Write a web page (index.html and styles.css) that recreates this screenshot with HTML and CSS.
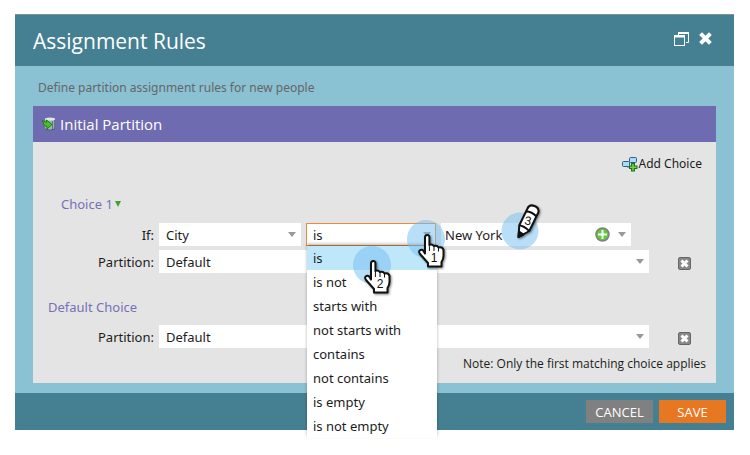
FILE: index.html
```
<!DOCTYPE html>
<html lang="en">
<head>
    <meta charset="utf-8">
    <title>Assignment Rules</title>
    <link rel="stylesheet" href="styles.css">
</head>

<body>
    <form class="dialog">
        <header class="dialog-header">
            <h1>Assignment Rules</h1>
            <div class="window-tools">
                <button type="button" class="icon-button" aria-label="Restore window">
                    <svg width="16" height="16" viewBox="0 0 16 16" fill="none" stroke="#fff">
                        <path d="M4.5 5V1.5H14.500V11.500H12"/>
                        <path d="M4 2H15" stroke-width="2"/>
                        <rect x=".5" y="4.500" width="10" height="10"/>
                        <path d="M0 5.500H11" stroke-width="2"/>
                    </svg>
                </button>
                <button type="button" class="icon-button" aria-label="Close">
                    <svg width="13" height="13" viewBox="0 0 13 13" stroke="#fff" stroke-width="4">
                        <path d="M1.600 1.600L11.400 11.400M11.400 1.600L1.600 11.400"/>
                    </svg>
                </button>
            </div>
        </header>

        <main class="dialog-body">
            <p class="description">Define partition assignment rules for new people</p>

            <section class="panel">
                <h2 class="panel-title">
                    <svg width="14" height="14" viewBox="0 0 14 14">
                        <path d="M3 2V12Q8 14.500 13 12V2Z" fill="#9fb3b5"/>
                        <ellipse cx="8" cy="2" rx="5" ry="1.500" fill="#dfe9ea"/>
                        <path d="M10.500 4V12.500M12.500 3V12" stroke="#5f7577"/>
                        <path d="M3 12Q8 14.500 13 12" fill="none" stroke="#485b5d"/>
                        <path d="M.5 3.500L4.500 5.500V3L10 7.500L5 12V9.500Q1.500 9 .5 3.500Z" fill="#45c422" stroke="#1d7a12"/>
                    </svg>
                    Initial Partition
                </h2>

                <div class="panel-body">
                    <div class="toolbar">
                        <button type="button" class="add-choice">
                            <svg width="16" height="16" viewBox="0 0 16 16">
                                <path d="M5 8V11H9" fill="none" stroke="#666"/>
                                <rect x="7.500" y="1.500" width="7" height="5" rx="1" fill="#a9dcf8" stroke="#2b5f87"/>
                                <rect x=".5" y="5.500" width="7" height="5" rx="1" fill="#a9dcf8" stroke="#2b5f87"/>
                                <path d="M9 7H13V9.500H15.500V13H13V15.500H9V13H7V9.500H9Z" fill="#237318"/>
                                <path d="M11 8V14.500M8 11.300H14.500" stroke="#68d83e" stroke-width="1.600"/>
                            </svg>
                            Add Choice
                        </button>
                    </div>

                    <h3 class="choice-title">Choice 1 <span class="green-arrow"></span></h3>

                    <div class="row">
                        <label for="attribute">If:</label>
                        <div class="condition">
                            <div class="field">
                                <select id="attribute"><option>City</option></select>
                            </div>
                            <div class="field operator">
                                <select aria-label="Operator"><option>is</option></select>
                                <ul class="menu" role="listbox" aria-label="Operator">
                                    <li role="option" class="selected" aria-selected="true">is</li>
                                    <li role="option">is not</li>
                                    <li role="option">starts with</li>
                                    <li role="option">not starts with</li>
                                    <li role="option">contains</li>
                                    <li role="option">not contains</li>
                                    <li role="option">is empty</li>
                                    <li role="option">is not empty</li>
                                </ul>
                                <svg class="step step-one" width="48" height="54" viewBox="0 0 48 54">
                                    <circle cx="20" cy="20" r="19" class="spot"/>
                                    <g class="hand">
                                        <path d="M19 18.500Q19 16 21.200 16T23.400 18.500V26Q25.500 24.500 28 27Q31 26 32.500 28.500Q36.500 27.500 37.500 31V37Q37.500 40 35.500 43V47.500H22V44L14 35Q12 32 14.500 31T19 34.500Z"/>
                                        <path class="knuckles" d="M23.400 26V32M28 27V32M32.500 28.500V32.500"/>
                                    </g>
                                    <text x="28" y="43" class="step-number">1</text>
                                </svg>
                                <svg class="step step-two" width="48" height="54" viewBox="0 0 48 54">
                                    <circle cx="20" cy="20" r="19" class="spot"/>
                                    <g class="hand">
                                        <path d="M19 18.500Q19 16 21.200 16T23.400 18.500V26Q25.500 24.500 28 27Q31 26 32.500 28.500Q36.500 27.500 37.500 31V37Q37.500 40 35.500 43V47.500H22V44L14 35Q12 32 14.500 31T19 34.500Z"/>
                                        <path class="knuckles" d="M23.400 26V32M28 27V32M32.500 28.500V32.500"/>
                                    </g>
                                    <text x="28" y="43" class="step-number">2</text>
                                </svg>
                            </div>
                            <div class="field value">
                                <input type="text" aria-label="Value" value="New York">
                                <button type="button" class="icon-button" aria-label="Add value">
                                    <svg width="15" height="15" viewBox="0 0 15 15">
                                        <circle cx="7.500" cy="7.500" r="6.500" fill="#5cc83b" stroke="#808080" stroke-width="1.500"/>
                                        <path d="M7.500 3V12M3 7.500H12" stroke="#fff" stroke-width="2"/>
                                    </svg>
                                </button>
                                <svg class="step step-three" width="48" height="50" viewBox="0 0 48 50">
                                    <circle cx="20" cy="30" r="18.500" class="spot"/>
                                    <g class="pencil">
                                        <path d="M18.500 36L19.300 24.300L27.500 7.500Q29.500 3 34.500 5T38.300 11.500L29.300 30Z"/>
                                        <path d="M19.300 24.300Q24 25 29.300 30M26 10.500Q32 10.500 36.500 15.500" fill="none"/>
                                        <path d="M19 30.500L18.500 36L23.500 33.500Z" fill="#111"/>
                                    </g>
                                    <text x="28" y="24" class="step-number" transform="rotate(10 28 20)">3</text>
                                </svg>
                            </div>
                        </div>
                    </div>

                    <div class="row">
                        <label for="partition">Partition:</label>
                        <div class="field">
                            <select id="partition"><option>Default</option></select>
                        </div>
                        <button type="button" class="icon-button" aria-label="Remove choice">
                            <svg width="13" height="13" viewBox="0 0 13 13">
                                <rect x=".5" y=".5" width="12" height="12" rx="1.500" fill="#888" stroke="#666"/>
                                <path d="M3.500 3.500L9.500 9.500M9.500 3.500L3.500 9.500" stroke="#fff" stroke-width="3"/>
                            </svg>
                        </button>
                    </div>

                    <h3 class="default-title">Default Choice</h3>

                    <div class="row">
                        <label for="default-partition">Partition:</label>
                        <div class="field">
                            <select id="default-partition"><option>Default</option></select>
                        </div>
                        <button type="button" class="icon-button" aria-label="Remove default choice">
                            <svg width="13" height="13" viewBox="0 0 13 13">
                                <rect x=".5" y=".5" width="12" height="12" rx="1.500" fill="#888" stroke="#666"/>
                                <path d="M3.500 3.500L9.500 9.500M9.500 3.500L3.500 9.500" stroke="#fff" stroke-width="3"/>
                            </svg>
                        </button>
                    </div>

                    <p class="note">Note: Only the first matching choice applies</p>
                </div>
            </section>
        </main>

        <footer class="dialog-footer">
            <button type="button" class="cancel">CANCEL</button>
            <button type="submit" class="save">SAVE</button>
        </footer>
    </form>
</body>
</html>
```
FILE: styles.css
```
* {
    box-sizing: border-box;
}

body {
    min-height: 100vh;
    margin: 0;
    padding: 14px 16px 14px 15px;
    background: #fff;
    font: 13px/18px "Noto Sans", sans-serif;
    color: #1c1c1c;
}

h1, h2, h3, p, ul {
    margin: 0;
    padding: 0;
    font-weight: normal;
}

button, input, select {
    margin: 0;
    padding: 0;
    border: 0;
    background: none;
    color: inherit;
    font: inherit;
}

.dialog {
    background: #8ac1d3;
}

.dialog-header {
    display: flex;
    align-items: center;
    justify-content: space-between;
    height: 52px;
    padding: 0 22px 0 18px;
    border-top: 1px solid #7b959e;
    background: #458092;
    color: #fff;
}

.dialog-header h1 {
    font: 21px/30px "Open Sans", sans-serif;
}

.window-tools {
    display: flex;
    align-items: center;
    gap: 9px;
    padding-bottom: 4px;
}

.icon-button {
    display: flex;
}

.dialog-body {
    padding: 13px 18px 10px;
}

.description {
    padding-left: 5px;
    margin-bottom: 9px;
    color: #666;
    font-size: 12px;
}

.panel-title {
    display: flex;
    align-items: center;
    gap: 4px;
    height: 36px;
    padding-left: 9px;
    background: #6f6bb0;
    color: #fff;
    font: 15px/20px "Open Sans", sans-serif;
}

.panel-body {
    padding: 13px 0 10px;
    background: #e4e4e4;
}

.toolbar {
    display: flex;
    justify-content: flex-end;
    padding-right: 14px;
}

.add-choice {
    display: flex;
    align-items: center;
    gap: 1px;
    font-size: 12px;
}

.choice-title,
.default-title {
    color: #7671b6;
    font-size: 13px;
    line-height: 18px;
}

.choice-title {
    display: flex;
    align-items: center;
    gap: 2px;
    margin: 22px 0 10px;
    padding-left: 28px;
}

.default-title {
    margin: 25px 0 9px;
    padding-left: 15px;
}

.green-arrow {
    border: solid transparent;
    border-width: 6px 3px 0;
    border-top-color: #3fa32c;
}

.row {
    display: grid;
    grid-template-columns: 121px 1fr 37px;
    column-gap: 5px;
    align-items: center;
    margin-right: 25px;
}

.row + .row {
    margin-top: 4px;
}

.row label {
    text-align: right;
}

.row > .icon-button {
    justify-content: flex-end;
    padding-top: 3px;
}

.condition {
    display: grid;
    grid-template-columns: 142fr 130fr 190fr;
    gap: 5px;
    padding-right: 18px;
}

.field {
    position: relative;
    display: flex;
    align-items: center;
    min-width: 0;
    height: 23px;
    background: #fff;
}

/* drop-down arrow */
.field::after {
    content: "";
    position: absolute;
    top: 9px;
    right: 5px;
    border: solid transparent;
    border-width: 5px 4px 0;
    border-top-color: #999;
    pointer-events: none;
}

.field select,
.field input {
    width: 100%;
    min-width: 0;
    height: 23px;
    padding-left: 7px;
    appearance: none;
    outline: none;
}

.operator select {
    border: 1px solid #ed8a3f;
    padding-left: 6px;
}

.value {
    padding-right: 21px;
}

.value input {
    padding-left: 4px;
}

.menu {
    position: absolute;
    top: 23px;
    left: 1px;
    right: -1px;
    z-index: 1;
    background: #fff;
    box-shadow: 0 -2px 3px rgba(0, 0, 0, 0.3);
    list-style: none;
}

.menu li {
    padding-left: 6px;
    line-height: 24px;
}

.menu .selected {
    background: #bfe7fa;
}

/* numbered pointers over the fields */
.step {
    position: absolute;
    z-index: 2;
    pointer-events: none;
}

.step-one {
    top: -4px;
    right: -18px;
}

.step-two {
    top: 22px;
    right: 36px;
}

.step-three {
    top: -22px;
    left: 59px;
}

.spot {
    fill: rgba(115, 189, 239, 0.5);
}

.hand,
.pencil {
    fill: #fff;
    stroke: #111;
    stroke-width: 2;
    stroke-linejoin: round;
    filter: drop-shadow(1px 1px 1px rgba(0, 0, 0, 0.5));
}

.knuckles {
    stroke-width: 1;
}

.step-number {
    font: 12px "Liberation Sans", sans-serif;
    text-anchor: middle;
    fill: #111;
}

.note {
    margin-top: 7px;
    padding-right: 10px;
    text-align: right;
    font: 12px/18px "Open Sans", sans-serif;
}

.dialog-footer {
    display: flex;
    justify-content: flex-end;
    gap: 6px;
    padding: 7px 8px;
    background: #458092;
}

.dialog-footer button {
    width: 67px;
    height: 23px;
    color: #fff;
    font: 13px/18px "Open Sans", sans-serif;
}

.cancel {
    background: #808080;
}

.save {
    background: #e87722;
}
```
